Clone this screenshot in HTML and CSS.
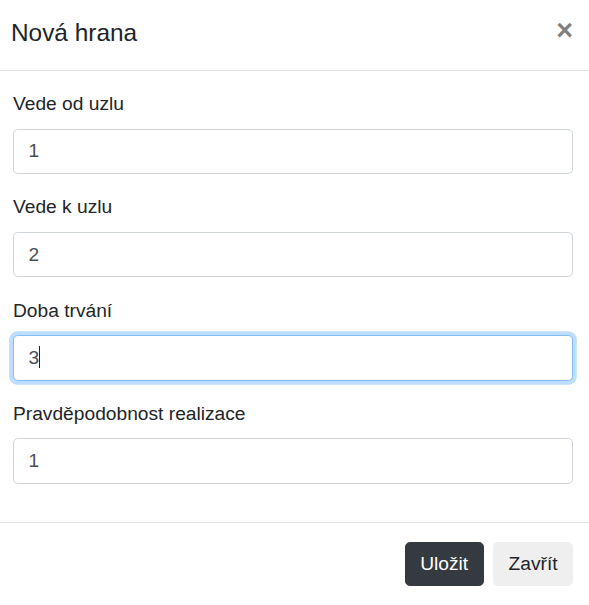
FILE: index.html
```html
<!DOCTYPE html>
<html lang="cs">
<head>
<meta charset="utf-8">
<title>Nová hrana</title>
<link rel="stylesheet" href="styles.css">
</head>
<body>
<div class="modal">
  <div class="modal-header">
    <h5 class="modal-title">Nová hrana</h5>
    <button type="button" class="close" aria-label="Close"><span aria-hidden="true">×</span></button>
  </div>
  <div class="modal-body">
    <div class="form-group">
      <label class="form-label" for="from">Vede od uzlu</label>
      <input class="form-control" id="from" type="text" value="1">
    </div>
    <div class="form-group">
      <label class="form-label" for="to">Vede k uzlu</label>
      <input class="form-control" id="to" type="text" value="2">
    </div>
    <div class="form-group">
      <label class="form-label" for="dur">Doba trvání</label>
      <div class="field-wrap">
        <input class="form-control is-focused" id="dur" type="text" value="3">
        <span class="caret"></span>
      </div>
    </div>
    <div class="form-group">
      <label class="form-label" for="prob">Pravděpodobnost realizace</label>
      <input class="form-control" id="prob" type="text" value="1">
    </div>
  </div>
  <div class="modal-footer">
    <button type="button" class="btn btn-dark">Uložit</button>
    <button type="button" class="btn btn-light">Zavřít</button>
  </div>
</div>
</body>
</html>
```
FILE: styles.css
```css
* { box-sizing: border-box; }
html, body {
  margin: 0;
  padding: 0;
  background: #fff;
}
body {
  font-family: "Liberation Sans", Arial, sans-serif;
  font-size: 19.2px;
  line-height: 1.5;
  color: #212529;
}
.modal {
  width: 589px;
  background: #fff;
}
.modal-header {
  display: flex;
  justify-content: space-between;
  align-items: flex-start;
  height: 71px;
  padding: 15px 16px 0 11px;
  border-bottom: 1px solid #e5e5e5;
}
.modal-title {
  margin: 0;
  font-size: 24.4px;
  font-weight: 400;
  line-height: 36px;
}
.close {
  border: 0;
  background: transparent;
  padding: 0;
  margin: 0;
  font-family: "Liberation Sans", Arial, sans-serif;
  font-size: 28.8px;
  font-weight: 700;
  line-height: 30px;
  color: #000;
  opacity: 0.5;
  cursor: pointer;
}
.modal-body {
  padding: 19.2px 16px 19.2px 13px;
}
.form-group {
  margin-bottom: 19.2px;
}
.form-label {
  display: block;
  margin-bottom: 9.6px;
}
.field-wrap {
  position: relative;
}
.form-control {
  display: block;
  width: 100%;
  height: 45.6px;
  padding: 7.2px 14.4px;
  font-family: "Liberation Sans", Arial, sans-serif;
  font-size: 19.2px;
  line-height: 1.5;
  color: #495057;
  background: #fff;
  border: 1px solid #ced4da;
  border-radius: 4.8px;
  outline: none;
}
.form-control.is-focused {
  border-color: #80bdff;
  box-shadow: 0 0 0 3.84px rgba(0, 123, 255, 0.25);
}
.caret {
  position: absolute;
  left: 26px;
  top: 11px;
  width: 1px;
  height: 22px;
  background: #212529;
}
.modal-footer {
  display: flex;
  justify-content: flex-end;
  gap: 9.6px;
  padding: 19px 16px 19px 0;
  border-top: 1px solid #e5e5e5;
}
.btn {
  display: inline-block;
  height: 44px;
  padding: 0 14.4px;
  font-family: "Liberation Sans", Arial, sans-serif;
  font-size: 19.2px;
  line-height: 1.5;
  border: 1px solid transparent;
  border-radius: 4.8px;
  cursor: pointer;
}
.btn-dark {
  background: #343a40;
  border-color: #343a40;
  color: #fff;
}
.btn-light {
  background: #efefef;
  border-color: #efefef;
  color: #212529;
}
```
